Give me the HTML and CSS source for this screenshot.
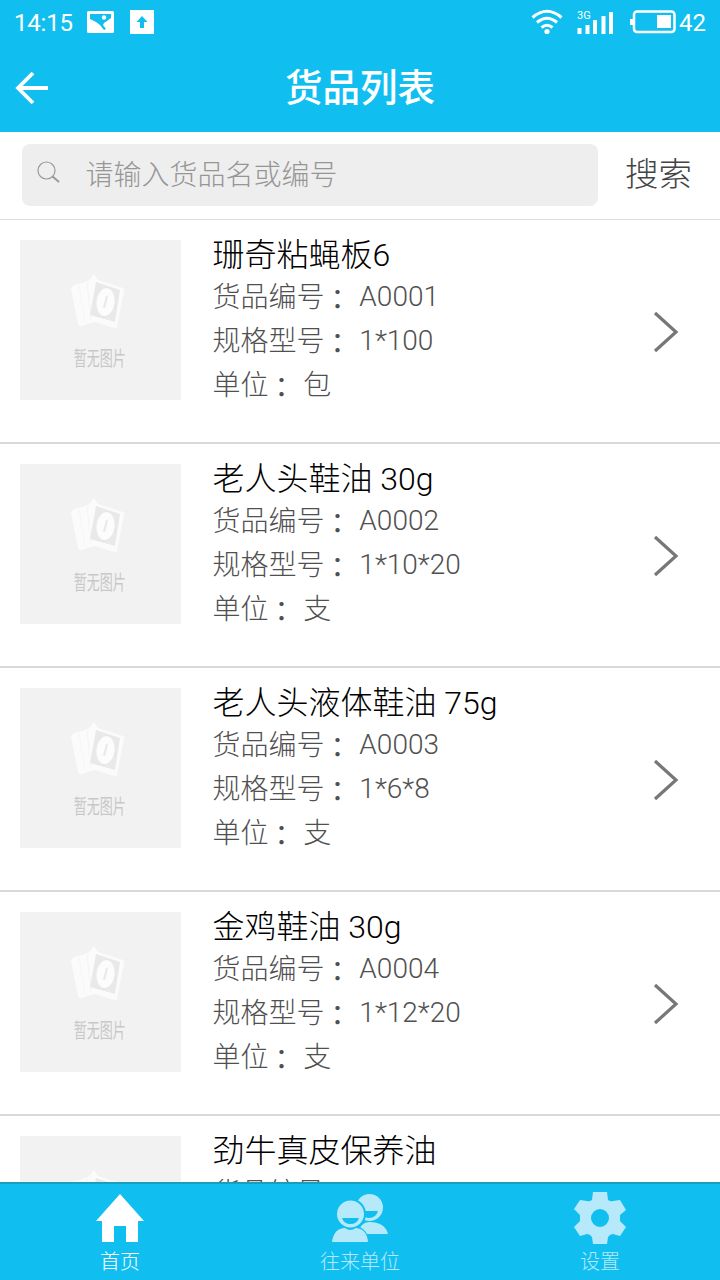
FILE: index.html
```html
<!DOCTYPE html>
<html lang="zh-CN">
<head>
<meta charset="utf-8">
<title>货品列表</title>
<link rel="stylesheet" href="styles.css">
</head>
<body>
<svg class="defs" width="0" height="0" aria-hidden="true">
  <symbol id="cards" viewBox="0 0 60 60">
    <path fill="#fbfbfb" d="M3 14 L19 9 L25 2 L29 8 L54 16 Q56 17 55 19 L48 55 Q47 57 45 56 L26 50 L12 54 Q10 55 9 52 L2 17 Q2 15 3 14Z"/>
    <path fill="none" stroke="#f5f5f5" d="M10 13 L16 50 M18 10 L22 48"/>
    <path fill="#e9e9e9" d="M27 10 L51 18 L46 50 L21 43Z"/>
    <ellipse cx="36.500" cy="30" rx="9" ry="14" fill="#fcfcfc" transform="rotate(7 36 30)"/>
    <path fill="none" stroke="#e9e9e9" stroke-width="2" d="M38 24 L35 36"/>
  </symbol>
  <symbol id="chevron" viewBox="0 0 26 42">
    <path fill="none" stroke="#777" stroke-width="3.200" d="M2 2 L23 21 L2 40"/>
  </symbol>
</svg>
<div class="screen">
  <header class="header">
    <div class="status">
      <span class="time">14:15</span>
      <svg class="status-photo" width="27" height="22" viewBox="0 0 27 22"><rect width="27" height="22" rx="1.500" fill="#fff"/><path fill="#10bff0" d="M3 3H24V7L20 10L17 12L16 14L19 18L17 19L13 14L9 11L3 8Z"/><circle cx="17" cy="6.500" r="2.200" fill="#fff"/></svg>
      <svg class="status-upload" width="24" height="24" viewBox="0 0 24 24"><rect width="24" height="24" fill="#fff"/><path fill="#10bff0" d="M12 6L17.500 12H14V18H10V12H6.500Z"/></svg>
      <svg class="status-wifi" width="32" height="26" viewBox="0 0 32 26"><g fill="none" stroke="#fff" stroke-width="3"><path d="M1.500 8.500Q16 -4 30.500 8.500"/><path d="M6 13.500Q16 5 26 13.500"/><path d="M10.500 18.500Q16 14 21.500 18.500"/></g><circle cx="16" cy="22.500" r="2.600" fill="#fff"/></svg>
      <span class="signal">
        <span class="network">3G</span>
        <svg width="37" height="24" viewBox="0 0 37 24"><path fill="none" stroke="#fff" stroke-width="4" d="M2.500 17V23M10.500 14V23M18 9V23M26.500 5V23M34 1V23"/></svg>
      </span>
      <svg class="status-battery" width="46" height="24" viewBox="0 0 46 24"><rect x="4" y="1.500" width="40.500" height="20.500" rx="3" fill="none" stroke="#fff" stroke-width="2.500"/><path fill="#fff" d="M0 9H4V15H0ZM27 5H41V18H27Z"/></svg>
      <span class="percent">42</span>
    </div>
    <div class="title-bar">
      <svg class="back" width="34" height="34" viewBox="0 0 34 34"><path fill="none" stroke="#fff" stroke-width="3.800" d="M33 17H3M18 2L3 17L18 32"/></svg>
      <h1 class="title">货品列表</h1>
    </div>
  </header>

  <div class="search">
    <div class="search-box">
      <svg width="23" height="23" viewBox="0 0 23 23"><g fill="none" stroke="#999"><circle cx="9.500" cy="9.500" r="8.500" stroke-width="1.200"/><path stroke-width="2" d="M15.500 15.500L22 21"/></g></svg>
      <span class="placeholder">请输入货品名或编号</span>
    </div>
    <span class="search-button">搜索</span>
  </div>

  <main class="list">
    <article class="item">
      <div class="thumb"><svg class="cards"><use href="#cards"/></svg><span class="thumb-text">暂无图片</span></div>
      <div class="info"><h2 class="name">珊奇粘蝇板6</h2><p>货品编号<span class="colon" lang="zh-TW">：</span> <span class="latin">A0001</span></p><p>规格型号<span class="colon" lang="zh-TW">：</span> <span class="latin">1*100</span></p><p>单位<span class="colon" lang="zh-TW">：</span> 包</p></div>
      <svg class="chevron"><use href="#chevron"/></svg>
    </article>
    <article class="item">
      <div class="thumb"><svg class="cards"><use href="#cards"/></svg><span class="thumb-text">暂无图片</span></div>
      <div class="info"><h2 class="name">老人头鞋油 30g</h2><p>货品编号<span class="colon" lang="zh-TW">：</span> <span class="latin">A0002</span></p><p>规格型号<span class="colon" lang="zh-TW">：</span> <span class="latin">1*10*20</span></p><p>单位<span class="colon" lang="zh-TW">：</span> 支</p></div>
      <svg class="chevron"><use href="#chevron"/></svg>
    </article>
    <article class="item">
      <div class="thumb"><svg class="cards"><use href="#cards"/></svg><span class="thumb-text">暂无图片</span></div>
      <div class="info"><h2 class="name">老人头液体鞋油 75g</h2><p>货品编号<span class="colon" lang="zh-TW">：</span> <span class="latin">A0003</span></p><p>规格型号<span class="colon" lang="zh-TW">：</span> <span class="latin">1*6*8</span></p><p>单位<span class="colon" lang="zh-TW">：</span> 支</p></div>
      <svg class="chevron"><use href="#chevron"/></svg>
    </article>
    <article class="item">
      <div class="thumb"><svg class="cards"><use href="#cards"/></svg><span class="thumb-text">暂无图片</span></div>
      <div class="info"><h2 class="name">金鸡鞋油 30g</h2><p>货品编号<span class="colon" lang="zh-TW">：</span> <span class="latin">A0004</span></p><p>规格型号<span class="colon" lang="zh-TW">：</span> <span class="latin">1*12*20</span></p><p>单位<span class="colon" lang="zh-TW">：</span> 支</p></div>
      <svg class="chevron"><use href="#chevron"/></svg>
    </article>
    <article class="item">
      <div class="thumb"><svg class="cards"><use href="#cards"/></svg></div>
      <div class="info"><h2 class="name">劲牛真皮保养油</h2><p>货品编号</p></div>
    </article>
  </main>

  <nav class="tabs">
    <div class="tab active">
      <svg width="58" height="54" viewBox="0 0 58 54"><path fill="#fff" d="M29 3L53 30H47V51H35V35H23V51H11V30H5Z"/></svg>
      <span>首页</span>
    </div>
    <div class="tab">
      <svg width="58" height="54" viewBox="0 0 58 54"><g fill="#b6eafa"><circle cx="38.500" cy="16.500" r="13.500"/><path d="M26 43Q30 31 38 31Q54 31 57 43Z"/></g><path fill="#10bff0" d="M27 20H47Q45 27 38 27Q32 27 27 20Z"/><circle cx="19.500" cy="23" r="15.500" fill="#10bff0"/><path fill="#10bff0" d="M0 52Q3 34 19 34Q36 34 39 52Z"/><g fill="#b6eafa"><circle cx="19.500" cy="23" r="13.500"/><path d="M1 51Q3 37 14 37Q19 41 25 37Q36 38 37 51Z"/></g><path fill="#10bff0" d="M11 27H28Q26 33 19.500 33Q13 33 11 27Z"/></svg>
      <span>往来单位</span>
    </div>
    <div class="tab">
      <svg width="58" height="54" viewBox="0 0 58 54"><path fill="#b6eafa" fill-rule="evenodd" d="M22 1H36L37 9Q40 11 42 10L49 9L55 19L49 24V30L55 36L49 45L42 43Q39 43 37 46L36 53H22L21 46Q19 43 16 43L9 45L3 36L9 30V24L3 18L9 9L16 10Q18 11 21 9ZM29 18A9 9 0 1 0 29 36A9 9 0 1 0 29 18Z"/></svg>
      <span>设置</span>
    </div>
  </nav>
</div>
</body>
</html>
```
FILE: styles.css
```css
* { box-sizing: border-box; }
body {
  margin: 0;
  background: #fff;
  font-family: Roboto, "Noto Sans CJK SC", sans-serif;
  font-weight: 300;
}
h1, h2, p { margin: 0; }
svg { display: block; flex: none; }
.defs { position: absolute; }
.screen {
  display: flex;
  flex-direction: column;
  width: 720px;
  height: 1280px;
  overflow: hidden;
}
.header {
  flex: none;
  height: 132px;
  background: #10bff0;
  color: #fff;
}
.status {
  display: flex;
  align-items: center;
  height: 44px;
  padding: 0 14px;
  font-size: 24px;
  font-weight: 400;
}
.time { width: 73px; letter-spacing: -0.2px; }
.status span { padding-top: 1px; }
.status-upload { margin-left: 16px; }
.status-wifi { margin-left: auto; }
.signal { position: relative; margin-left: 14px; }
.network {
  position: absolute;
  left: 0;
  top: -1px;
  font-size: 11px;
  line-height: 11px;
}
.status-battery { margin-left: 16px; }
.percent { margin-left: 3px; }
.title-bar {
  display: grid;
  grid-template-columns: 34px 1fr 34px;
  align-items: center;
  height: 88px;
  padding: 0 15px;
}
.title {
  padding-bottom: 1px;
  text-align: center;
  font-size: 37.5px;
  line-height: 56px;
  font-weight: 500;
}
.search {
  display: flex;
  flex: none;
  align-items: center;
  height: 88px;
  padding: 0 28px 1px 22px;
  border-bottom: 1px solid #ddd;
}
.search-box {
  display: flex;
  align-items: center;
  width: 576px;
  height: 62px;
  padding-left: 15px;
  border-radius: 8px;
  background: #eee;
}
.search-box svg { margin-bottom: 6px; }
.placeholder {
  margin: 2px 0 0 25.5px;
  font-size: 28px;
  line-height: 40px;
  color: #969696;
}
.search-button {
  margin-left: 27px;
  font-size: 33.5px;
  line-height: 48px;
  color: #444;
}
.list {
  flex: 1;
  min-height: 0;
  overflow: hidden;
}
.item {
  display: flex;
  height: 224px;
  padding: 20px 41px 0 20px;
  border-bottom: 2px solid #d9d9d9;
}
.thumb {
  display: flex;
  flex: none;
  flex-direction: column;
  align-items: center;
  width: 161px;
  height: 160px;
  padding: 32px 4px 0 0;
  background: #f2f2f2;
}
.cards { width: 60px; height: 60px; }
.thumb-text {
  margin-top: 14px;
  padding-left: 2px;
  font-size: 20px;
  line-height: 26px;
  font-weight: 400;
  color: #c8c8c8;
  transform: scaleX(0.65);
}
.info { flex: 1; padding-left: 31.5px; }
.name {
  margin-top: -6px;
  font-size: 32px;
  line-height: 42px;
  font-weight: 300;
  color: #000;
}
.info p {
  font-size: 28px;
  height: 44px;
  line-height: 44px;
  color: #505050;
}
.info p .latin {
  line-height: 1;
  vertical-align: 1px;
}
.info .colon {
  margin: 0 1px 0 -1px;
  font-family: "Noto Sans CJK TC", sans-serif;
  font-weight: 400;
  line-height: 1;
  vertical-align: -3px;
}
.chevron {
  width: 26px;
  height: 42px;
  margin-top: 71px;
}
.tabs {
  display: grid;
  flex: none;
  grid-template-columns: repeat(3, 1fr);
  height: 98px;
  border-top: 2px solid #199fba;
  background: #10bff0;
}
.tab {
  display: flex;
  flex-direction: column;
  align-items: center;
  padding-top: 7px;
  font-size: 20px;
  line-height: 34px;
  color: #b6eafa;
}
.tab.active { color: #fff; }
```
